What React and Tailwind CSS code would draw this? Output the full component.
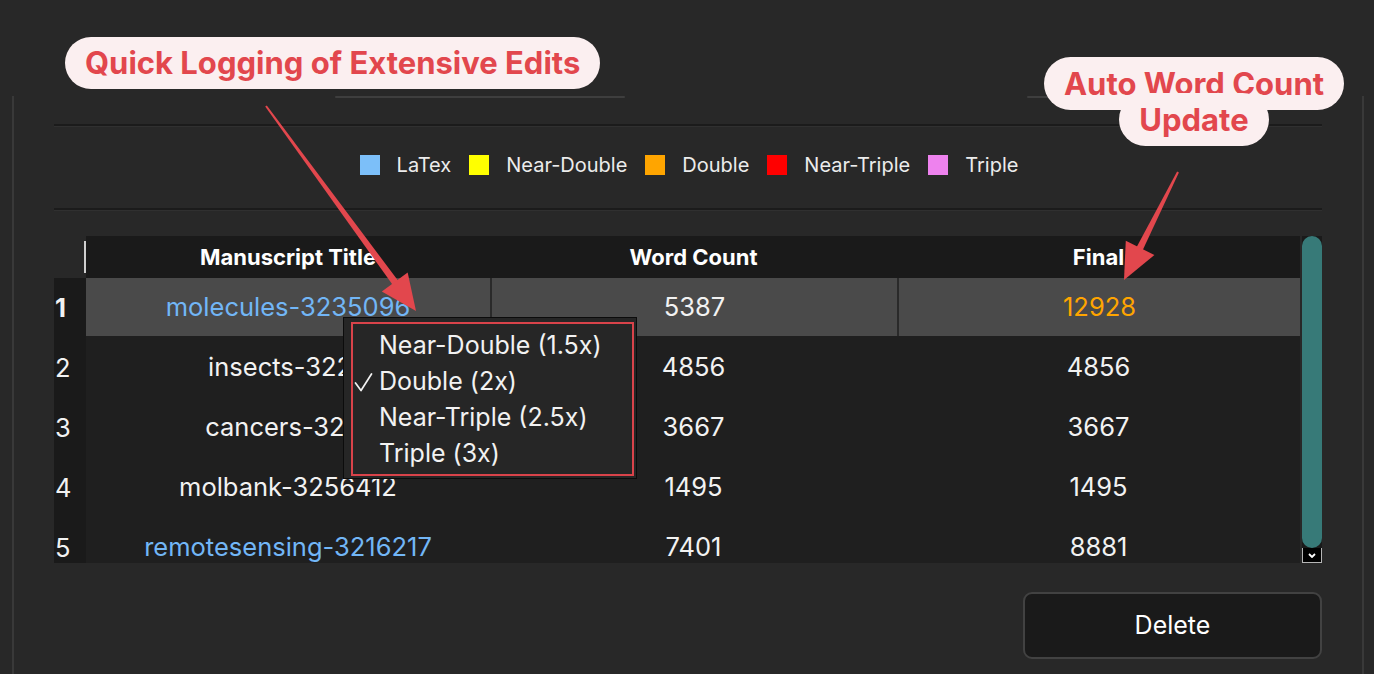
const legend = [
  { label: 'LaTex', color: 'bg-[#7cbff9]' },
  { label: 'Near-Double', color: 'bg-[#ffff00]' },
  { label: 'Double', color: 'bg-[#ffa500]' },
  { label: 'Near-Triple', color: 'bg-[#ff0000]' },
  { label: 'Triple', color: 'bg-[#ee82ee]' },
]

const rows = [
  { n: 1, title: 'molecules-3235096', wc: '5387', fin: '12928', blue: true, selected: true },
  { n: 2, title: 'insects-3228', wc: '4856', fin: '4856' },
  { n: 3, title: 'cancers-3281', wc: '3667', fin: '3667' },
  { n: 4, title: 'molbank-3256412', wc: '1495', fin: '1495' },
  { n: 5, title: 'remotesensing-3216217', wc: '7401', fin: '8881', blue: true },
]

const menu = ['Near-Double (1.5x)', 'Double (2x)', 'Near-Triple (2.5x)', 'Triple (3x)']

// tapered arrow drawn as two polygons
function Arrow({ from, to, head = 36, half = 16, w0 = 1, w1 = 3.5 }) {
  const dx = to[0] - from[0]
  const dy = to[1] - from[1]
  const len = Math.hypot(dx, dy)
  const ux = dx / len
  const uy = dy / len
  const px = -uy
  const py = ux
  const bx = to[0] - ux * head
  const by = to[1] - uy * head
  const ex = bx + ux * 6
  const ey = by + uy * 6
  const shaft = [
    [from[0] + px * w0, from[1] + py * w0],
    [ex + px * w1, ey + py * w1],
    [ex - px * w1, ey - py * w1],
    [from[0] - px * w0, from[1] - py * w0],
  ]
  const tri = [
    [bx + px * half, by + py * half],
    to,
    [bx - px * half, by - py * half],
  ]
  const pts = (a) => a.map((p) => p.join(',')).join(' ')
  return (
    <g fill="#e2474d">
      <polygon points={pts(shaft)} />
      <polygon points={pts(tri)} />
    </g>
  )
}

function Separator() {
  return <div className="h-[3px] border-t-2 border-[#1b1b1b] border-b border-b-[#303030]" />
}

export default function App() {
  return (
    <div className="relative w-[1374px] h-[674px] overflow-hidden bg-[#282828] text-[#f2f2f2] font-['Inter','Noto_Sans',sans-serif]">
      <div className="pt-[96px] h-full">
        <div className="ml-[12px] mr-[10px] h-full border-x-2 border-[#393939]">
          <div className="flex h-[2px]">
            <div className="ml-[321px] w-[290px] rounded-full bg-[#3e3e3e]" />
            <div className="ml-[402px] w-[290px] rounded-full bg-[#3e3e3e]" />
          </div>

          <div className="px-[40px]">
            <div className="mt-[26px]">
              <Separator />
            </div>

            <div className="h-[81px] flex items-center justify-center gap-[18px] pl-[2px] pb-[5px]">
              {legend.map((l) => (
                <div key={l.label} className="flex items-center gap-[17px]">
                  <div className={`w-[20px] h-[20px] ${l.color}`} />
                  <span className="text-[20px] text-[#ececec]">{l.label}</span>
                </div>
              ))}
            </div>

            <Separator />

            <div className="mt-[25px] flex h-[327px]">
              <div className="w-[1246px] flex flex-col overflow-hidden">
                <div className="flex h-[42px] shrink-0">
                  <div className="w-[32px] flex items-center justify-end">
                    <div className="w-[2px] h-[32px] bg-[#cfcfcf]" />
                  </div>
                  <div className="flex bg-[#1a1a1a] text-[22px] font-bold text-white">
                    <div className="w-[404px] flex items-center justify-center">Manuscript Title</div>
                    <div className="w-[407px] flex items-center justify-center">Word Count</div>
                    <div className="w-[403px] flex items-center justify-center">Final</div>
                  </div>
                </div>

                {rows.map((r) => (
                  <div key={r.n} className="flex h-[60px] shrink-0 text-[25.5px]">
                    <div className={`w-[32px] bg-[#1a1a1a] flex items-center pl-[1px] ${r.selected ? 'font-bold' : ''}`}>
                      {r.n}
                    </div>
                    <div className="flex bg-[#1f1f1f] items-start">
                      <div
                        className={`w-[404px] h-[58px] flex items-center justify-center ${r.selected ? 'bg-[#4a4a4a]' : ''} ${r.blue ? 'text-[#72b6f6]' : ''}`}
                      >
                        {r.title}
                      </div>
                      <div
                        className={`w-[407px] h-[58px] flex items-center justify-center ${r.selected ? 'bg-[#4a4a4a] border-l-2 border-[#2a2a2a]' : ''}`}
                      >
                        {r.wc}
                      </div>
                      <div
                        className={`w-[403px] h-[58px] flex items-center justify-center ${r.selected ? 'bg-[#4a4a4a] border-l-2 border-[#2a2a2a] text-[#ffa500]' : ''}`}
                      >
                        {r.fin}
                      </div>
                    </div>
                  </div>
                ))}
              </div>

              <div className="ml-[2px] w-[20px] flex flex-col bg-[#1a1a1a]">
                <div className="flex-1 rounded-full bg-[#377a78]" />
                <div className="h-[15px] border border-[#b5b5b5] border-t-0 bg-black flex items-center justify-center">
                  <svg width="8" height="5" viewBox="0 0 8 5">
                    <path d="M1 1 L4 4 L7 1" stroke="white" strokeWidth="1.8" fill="none" />
                  </svg>
                </div>
              </div>
            </div>

            <div className="mt-[29px] flex justify-end">
              <button className="w-[299px] h-[67px] rounded-[9px] border-2 border-[#424242] bg-[#1a1a1a] text-[25px] text-white">
                Delete
              </button>
            </div>
          </div>
        </div>
      </div>

      {/* context menu */}
      <div className="absolute left-[343px] top-[317px] w-[294px] h-[162px] bg-[#262626] border border-[#0c0c0c] pt-[10px]">
        {menu.map((m, i) => (
          <div key={m} className="relative h-[36px] flex items-center pl-[35px] text-[25px] text-[#f2f2f2]">
            {i === 1 && (
              <svg className="absolute left-[10px] top-[9px]" width="19" height="19" viewBox="0 0 19 19">
                <path d="M1.5 10 L7 17.5 L17.5 1" stroke="#f2f2f2" strokeWidth="1.7" fill="none" strokeLinecap="round" strokeLinejoin="round" />
              </svg>
            )}
            {m}
          </div>
        ))}
        <div className="absolute left-[7px] top-[4px] right-[2px] bottom-[2px] border-2 border-[#d9434a]" />
      </div>

      {/* annotations */}
      <svg className="absolute inset-0 pointer-events-none" width="1374" height="674">
        <Arrow from={[266, 106]} to={[416, 311]} />
        <Arrow from={[1178, 172]} to={[1124, 280]} />
      </svg>

      <div className="absolute left-[65px] top-[37px] h-[52px] px-[20px] flex items-center rounded-full bg-[#fbeff0] text-[#e2474d] text-[31px] font-bold">
        Quick Logging of Extensive Edits
      </div>

      <div className="absolute left-[1034px] top-[66px] w-[320px] text-center text-[31px] font-bold leading-[36px]">
        <span className="box-decoration-clone bg-[#fbeff0] text-[#e2474d] rounded-full px-[20px] py-[8px]">
          Auto Word Count
          <br />
          Update
        </span>
      </div>
    </div>
  )
}
